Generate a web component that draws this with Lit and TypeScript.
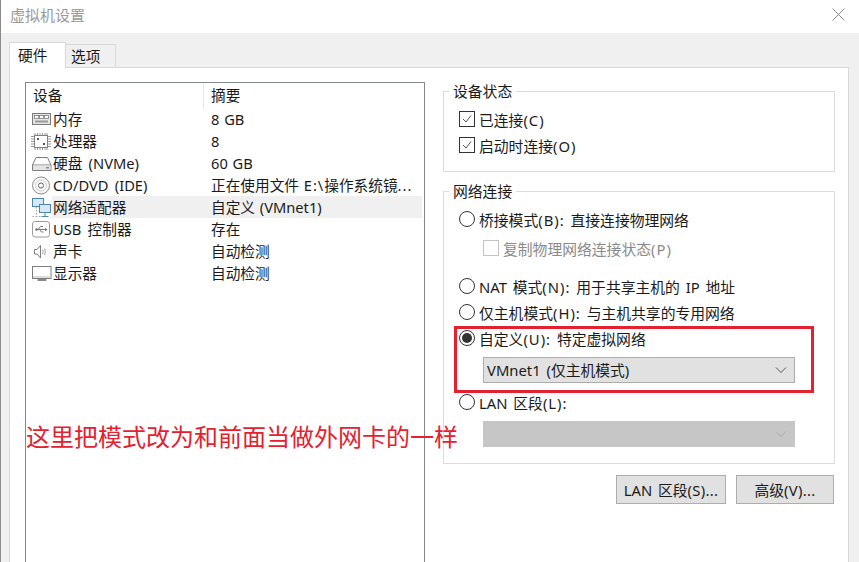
import { LitElement, html, css, svg } from 'lit';
import { customElement } from 'lit/decorators.js';

// device list rows, icon key + the two columns
const devices = [
  { icon: 'mem', name: '内存', summary: '8 GB' },
  { icon: 'cpu', name: '处理器', summary: '8' },
  { icon: 'disk', name: '硬盘 (NVMe)', summary: '60 GB' },
  { icon: 'cd', name: 'CD/DVD (IDE)', summary: '正在使用文件 E:\\操作系统镜...' },
  { icon: 'net', name: '网络适配器', summary: '自定义 (VMnet1)', selected: true },
  { icon: 'usb', name: 'USB 控制器', summary: '存在' },
  { icon: 'sound', name: '声卡', summary: '自动检测' },
  { icon: 'display', name: '显示器', summary: '自动检测' },
];

const icons: Record<string, unknown> = {
  mem: svg`<rect x="4.500" y="4.500" width="18" height="11" fill="#e6e6e6" stroke="#7a7a7a"/><rect x="6.500" y="6.500" width="4" height="3" fill="#fff" stroke="#7a7a7a" stroke-width=".8"/><rect x="11.500" y="6.500" width="4" height="3" fill="#fff" stroke="#7a7a7a" stroke-width=".8"/><rect x="16.500" y="6.500" width="4" height="3" fill="#fff" stroke="#7a7a7a" stroke-width=".8"/><path d="M7 12.500h13" stroke="#9a9a9a" stroke-width="2"/>`,
  cpu: svg`<rect x="6.500" y="4.500" width="13" height="12" fill="#fff" stroke="#808080"/><path d="M7 2v2M9.500 2v2M12 2v2M14.500 2v2M17 2v2M19 2v2M7 17v2M9.500 17v2M12 17v2M14.500 17v2M17 17v2M19 17v2M3 5.500h3M3 8h3M3 10.500h3M3 13h3M3 15.500h3M20 5.500h3M20 8h3M20 10.500h3M20 13h3M20 15.500h3" stroke="#9a9a9a"/><rect x="9" y="7" width="2" height="2" fill="#555"/><rect x="15" y="12" width="2" height="2" fill="#555"/>`,
  disk: svg`<path d="M4.500 12 8 4.500h11.500L23 12v5.500H4.500z" fill="#fff" stroke="#7d7d7d"/><path d="M4.500 12h18.500" stroke="#7d7d7d"/><rect x="5" y="12.500" width="17.500" height="4.500" fill="#e4e4e4"/><rect x="18" y="14" width="3" height="1.500" fill="#8a8a8a"/>`,
  cd: svg`<circle cx="13" cy="10.500" r="8.500" fill="#f6f6f6" stroke="#8c8c8c"/><circle cx="13" cy="10.500" r="5.500" fill="none" stroke="#d4d4d4"/><circle cx="13" cy="10.500" r="2.500" fill="#fff" stroke="#666"/>`,
  net: svg`<rect x="4.500" y="1.500" width="11" height="8" fill="#d6e8f5" stroke="#4f86ad"/><rect x="11.500" y="7.500" width="11" height="8" fill="#d6e8f5" stroke="#4f86ad"/><path d="M17 16v3M13.500 19.500h7" stroke="#4f86ad"/><path d="M8.500 10v9.500h4M4.500 19.500h4" stroke="#a0a0a0" stroke-dasharray="1.500 1.500" fill="none"/>`,
  usb: svg`<rect x="4.500" y="2.500" width="17" height="15.500" rx="2.500" fill="#fff" stroke="#9c9c9c"/><path d="M8 10.500h10M10 10.500l2.500-3h2.500M11.500 10.500l2 2.500h2" fill="none" stroke="#777"/><circle cx="8.500" cy="10.500" r="1.300" fill="#777"/><path d="M17 8.800v3.400l2.500-1.700z" fill="#777"/>`,
  sound: svg`<path d="M6.500 8.500h2.500l3.500-4v12.500l-3.500-4H6.500z" fill="#fff" stroke="#7d7d7d"/><path d="M14.500 8.500c.7 1.300.7 3 0 4.500M16.500 7.500c1 2 1 4.500 0 6.500" fill="none" stroke="#9c9c9c"/>`,
  display: svg`<rect x="4.500" y="3.500" width="18.500" height="12" fill="#fff" stroke="#7d7d7d"/><rect x="5" y="13" width="17.500" height="2" fill="#dcdcdc"/><path d="M9.500 17h9" stroke="#8a8a8a" stroke-width="2"/>`,
};

@customElement('app-root')
export class AppRoot extends LitElement {
  static styles = css`
    :host {
      display: block;
      font-family: "Noto Sans", "Noto Sans CJK SC", sans-serif;
      font-size: 14.67px;
      word-spacing: 2.5px;
      color: #1a1a1a;
    }
    .window {
      position: relative;
      width: 859px;
      height: 562px;
      overflow: hidden;
      background: #f0f0f0;
      display: flex;
      flex-direction: column;
      box-sizing: border-box;
      border-left: 1px solid #8a8a8a;
    }
    .titlebar {
      box-sizing: border-box;
      flex: none;
      height: 33px;
      background: #fff;
      display: flex;
      align-items: center;
      justify-content: space-between;
      padding: 0 14px 5px 9px;
      color: #9a9a9a;
      font-size: 15px;
    }
    .tabs {
      flex: none;
      height: 34px;
      display: flex;
      align-items: flex-end;
      padding-left: 8px;
      position: relative;
      z-index: 1;
    }
    .tab {
      box-sizing: border-box;
      border: 1px solid #d9d9d9;
      border-bottom: none;
    }
    .tab.on {
      width: 57px;
      height: 26px;
      background: #fff;
      margin-bottom: -1px;
      padding-left: 8px;
      line-height: 24px;
    }
    .tab.off {
      width: 50px;
      height: 23px;
      border-left: none;
      padding-left: 5px;
      line-height: 22px;
      background: #f0f0f0;
    }
    .panel {
      flex: 1;
      margin: 0 10px 0 8px;
      background: #fff;
      border: 1px solid #d9d9d9;
      border-bottom: none;
      padding: 14px 12px 0 15px;
      display: grid;
      grid-template-columns: 400px 392px;
      column-gap: 18px;
      min-height: 0;
    }
    .list {
      box-sizing: border-box;
      height: 600px;
      border: 1px solid #828790;
      padding: 0 2px;
    }
    .list-head {
      display: grid;
      grid-template-columns: 175px 1fr;
      height: 25px;
      line-height: 25px;
    }
    .list-head span { padding-left: 5px; }
    .list-head span + span {
      border-left: 1px solid #e5e5e5;
      padding-left: 7px;
    }
    .row {
      display: grid;
      grid-template-columns: 24px 152px 1fr;
      height: 22px;
      line-height: 22px;
      white-space: nowrap;
    }
    .row svg { width: 24px; height: 20px; margin-top: 1px; }
    .row .cell { padding-left: 1px; }
    .row .sum { padding-left: 7px; word-spacing: 1px; }
    .row.sel .cell, .row.sel .sum { background: #f0f0f0; }
    .key { letter-spacing: 1px; }
    .side {
      display: flex;
      flex-direction: column;
      padding-top: 9px;
      font-size: 14.8px;
      word-spacing: 2px;
    }
    .group {
      position: relative;
      box-sizing: border-box;
      border: 1px solid #dcdcdc;
      padding: 0 15px;
    }
    .group.status { height: 81px; margin-bottom: 19px; padding-top: 14px; }
    .group.network { height: 273px; padding-top: 14px; }
    .legend {
      position: absolute;
      top: -11px;
      left: 5px;
      padding: 0 4px;
      background: #fff;
      line-height: 20px;
    }
    .opt {
      display: flex;
      align-items: center;
      gap: 4px;
      height: 26px;
      white-space: nowrap;
    }
    .opt.sub { padding-left: 24px; color: #8a8a8a; height: 32px; }
    .opt.gap { margin-top: 9px; }
    .box {
      box-sizing: border-box;
      flex: none;
      width: 16px;
      height: 16px;
      border: 1px solid #333;
      background: #fff;
      display: flex;
      align-items: center;
      justify-content: center;
    }
    .box.off { border-color: #c4c4c4; }
    .box svg { width: 12px; height: 12px; }
    .radio {
      box-sizing: border-box;
      flex: none;
      width: 16px;
      height: 16px;
      border: 1px solid #333;
      border-radius: 50%;
      background: #fff;
      display: flex;
      align-items: center;
      justify-content: center;
    }
    .radio.on::after {
      content: '';
      width: 10px;
      height: 10px;
      border-radius: 50%;
      background: #333;
    }
    .combo {
      box-sizing: border-box;
      margin: 6px 24px;
      width: 312px;
      height: 26px;
      border: 1px solid #adadad;
      background: #e1e1e1;
      display: flex;
      align-items: center;
      padding: 0 7px 0 3px;
      line-height: 24px;
    }
    .combo.off { background: #c6c6c6; border-color: #c6c6c6; }
    .combo svg { width: 12px; height: 8px; margin-left: auto; }
    .buttons {
      display: flex;
      justify-content: flex-end;
      gap: 10px;
      padding: 11px 1px 0 0;
    }
    .btn {
      box-sizing: border-box;
      height: 29px;
      padding-bottom: 1px;
      border: 1px solid #adadad;
      background: #e1e1e1;
      display: flex;
      align-items: center;
      justify-content: center;
    }
    .btn .key { letter-spacing: .3px; }
    .btn.lan { width: 110px; }
    .btn.adv { width: 98px; }
    .callout {
      position: absolute;
      left: 453px;
      top: 326px;
      width: 360px;
      height: 67px;
      box-sizing: border-box;
      border: 3px solid #e3212f;
      pointer-events: none;
    }
    .note {
      position: absolute;
      left: 25px;
      top: 420px;
      color: #e3212f;
      font-size: 24px;
      line-height: 34px;
      white-space: nowrap;
      word-spacing: 0;
    }
  `;

  // hotkey marks and dots run a little wider than the rest of the text
  spaced(text: string) {
    return text
      .split(/(\([A-Z]\):?|\.\.\.|E:\\)/)
      .map((part, i) => (i % 2 ? html`<span class="key">${part}</span>` : part));
  }

  renderOpt(label: string, on = false, cls = '') {
    return html`<div class="opt ${cls}">
      <span class="radio ${on ? 'on' : ''}"></span><span>${this.spaced(label)}</span>
    </div>`;
  }

  renderCheck(label: string) {
    return html`<div class="opt">
      <span class="box">
        <svg viewBox="0 0 12 12"><path d="M2 6l3 3 5-6.500" fill="none" stroke="#555" stroke-width="1"/></svg>
      </span><span>${this.spaced(label)}</span>
    </div>`;
  }

  render() {
    const chevron = (c: string) =>
      html`<svg viewBox="0 0 12 8"><path d="M1 1.500l5 5 5-5" fill="none" stroke="${c}" stroke-width="1"/></svg>`;
    return html`
      <div class="window">
        <div class="titlebar">
          <span>虚拟机设置</span>
          <svg width="13" height="13" viewBox="0 0 13 13"><path d="M.5.5l12 12M12.500.5l-12 12" stroke="#8a8a8a" fill="none"/></svg>
        </div>
        <div class="tabs">
          <div class="tab on">硬件</div>
          <div class="tab off">选项</div>
        </div>
        <div class="panel">
          <div class="list">
            <div class="list-head"><span>设备</span><span>摘要</span></div>
            ${devices.map(
              (d) => html`<div class="row ${d.selected ? 'sel' : ''}">
                <svg viewBox="0 0 24 20">${icons[d.icon]}</svg>
                <span class="cell">${d.name}</span>
                <span class="sum">${this.spaced(d.summary)}</span>
              </div>`
            )}
          </div>
          <div class="side">
            <div class="group status">
              <span class="legend">设备状态</span>
              ${this.renderCheck('已连接(C)')}
              ${this.renderCheck('启动时连接(O)')}
            </div>
            <div class="group network">
              <span class="legend">网络连接</span>
              ${this.renderOpt('桥接模式(B): 直接连接物理网络')}
              <div class="opt sub"><span class="box off"></span><span>${this.spaced('复制物理网络连接状态(P)')}</span></div>
              ${this.renderOpt('NAT 模式(N): 用于共享主机的 IP 地址', false, 'gap')}
              ${this.renderOpt('仅主机模式(H): 与主机共享的专用网络')}
              ${this.renderOpt('自定义(U): 特定虚拟网络', true)}
              <div class="combo"><span>VMnet1 (仅主机模式)</span>${chevron('#555')}</div>
              ${this.renderOpt('LAN 区段(L):')}
              <div class="combo off">${chevron('#aaa')}</div>
            </div>
            <div class="buttons">
              <div class="btn lan"><span>${this.spaced('LAN 区段(S)...')}</span></div>
              <div class="btn adv"><span>${this.spaced('高级(V)...')}</span></div>
            </div>
          </div>
        </div>
        <div class="callout"></div>
        <div class="note">这里把模式改为和前面当做外网卡的一样</div>
      </div>
    `;
  }
}
